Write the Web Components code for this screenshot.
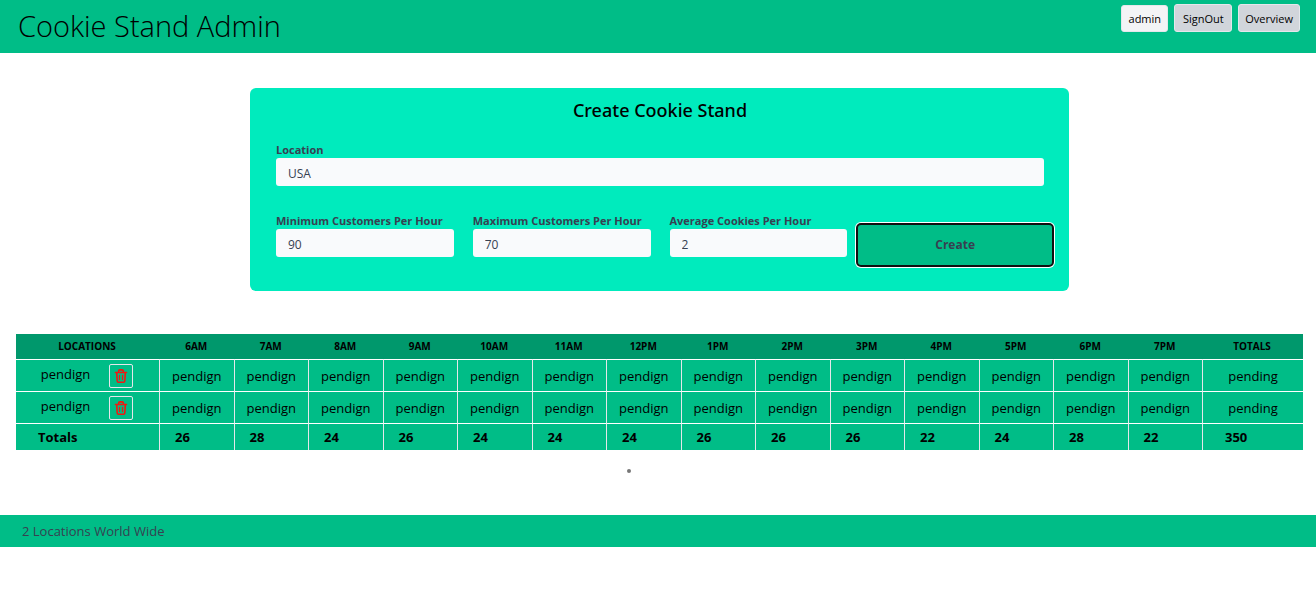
<!DOCTYPE html>
<html lang="en">
<head>
<meta charset="utf-8">
<title>Cookie Stand Admin</title>
<style>
  body {
    margin: 0;
    background: #fff;
    color: #000;
    font-family: "Open Sans", "Noto Sans", sans-serif;
    font-size: 13px;
    line-height: 20px;
    --green: #00bd87;
    --green-dark: #00986c;
    --mint: #00ebbd;
    --ink: #374151;
    --line: #e5e7eb;
  }
</style>
</head>
<body>
<cookie-stand-app></cookie-stand-app>

<script>
class BaseElement extends HTMLElement {
  connectedCallback() {
    if (this.shadowRoot) return;
    this.attachShadow({ mode: "open" }).innerHTML =
      "<style>*{box-sizing:border-box}" + this.styles() + "</style>" + this.markup();
  }
  styles() { return ""; }
  markup() { return "<slot></slot>"; }
}

class NavButton extends BaseElement {
  styles() {
    return `
      :host { display: block; }
      button {
        display: block; height: 28px; min-width: 58px; padding: 1px 6px 0;
        border: 1px solid var(--line); border-radius: 3px;
        background: #d1d5db; color: #000;
        font: 11px/20px "Open Sans", "Noto Sans", sans-serif;
      }
      :host([plain]) button { height: 27px; min-width: 47px; padding-top: 0; background: #f3f4f6; }`;
  }
  markup() { return `<button type="button"><slot></slot></button>`; }
}
customElements.define("nav-button", NavButton);

class AppHeader extends BaseElement {
  styles() {
    return `
      :host { display: block; background: var(--green); }
      header { display: flex; justify-content: space-between; align-items: flex-start;
        min-height: 53px; padding: 4px 16px 0 18px; }
      h1 { margin: 0; font-size: 29px; line-height: 44px; font-weight: 300; }
      nav { display: flex; gap: 6px; align-items: flex-end; }`;
  }
  markup() {
    return `<header><h1><slot></slot></h1>
      <nav><nav-button plain>admin</nav-button><nav-button>SignOut</nav-button><nav-button>Overview</nav-button></nav>
    </header>`;
  }
}
customElements.define("app-header", AppHeader);

class FormField extends BaseElement {
  styles() {
    return `
      :host { display: block; min-width: 0; }
      label { display: block; font-size: 11px; line-height: 16px; font-weight: 700; color: var(--ink); white-space: nowrap; }
      input { display: block; width: 100%; height: 28px; padding: 3px 12px 0;
        border: 0; border-radius: 3px; background: #f9fafc; color: var(--ink);
        font: 12px/20px "Open Sans", "Noto Sans", sans-serif; outline: 0; }`;
  }
  markup() {
    return `<label for="field">${this.getAttribute("label")}</label>
      <input id="field" type="text" value="${this.getAttribute("value")}">`;
  }
}
customElements.define("form-field", FormField);

class StandForm extends BaseElement {
  styles() {
    return `
      :host { display: block; width: 100%; max-width: 819px; }
      form { padding: 8px 25px 34px 26px; border-radius: 6px; background: var(--mint); }
      h2 { margin: 0 0 18px; text-align: center; font-family: "Noto Sans", "Open Sans", sans-serif;
        font-size: 18px; line-height: 28px; font-weight: 500; }
      .row { display: grid; grid-template-columns: repeat(4, 1fr); gap: 19px; margin-top: 27px; }
      button { align-self: end; height: 44px; margin: 0 -10px -10px; border: 2px solid #101010;
        border-radius: 5px; box-shadow: 0 0 0 1px #fff; background: var(--green); color: var(--ink);
        font: 700 12px/20px "Open Sans", "Noto Sans", sans-serif; }`;
  }
  markup() {
    return `<form>
      <h2>Create Cookie Stand</h2>
      <form-field label="Location" value="USA"></form-field>
      <div class="row">
        <form-field label="Minimum Customers Per Hour" value="90"></form-field>
        <form-field label="Maximum Customers Per Hour" value="70"></form-field>
        <form-field label="Average Cookies Per Hour" value="2"></form-field>
        <button type="button">Create</button>
      </div>
    </form>`;
  }
}
customElements.define("stand-form", StandForm);

class DeleteButton extends BaseElement {
  styles() {
    return `
      :host { display: block; }
      button { display: flex; align-items: center; justify-content: center; width: 24px; height: 24px;
        padding: 0; border: 1px solid var(--line); border-radius: 2px; background: none; }
      svg { display: block; width: 14px; height: 14px; }`;
  }
  markup() {
    return `<button type="button" aria-label="Delete location">
      <svg viewBox="0 0 14 14" fill="none" stroke="#f01810" stroke-width="1.6" stroke-linejoin="round" stroke-linecap="round">
        <path d="M1.5 3.5H12.5M2.7 3.5L3.2 12Q3.3 13.2 4.4 13.2H9.6Q10.7 13.2 10.8 12L11.3 3.5M4.6 3.4V2.3Q4.6 .9 6 .9H8Q9.4 .9 9.4 2.3V3.4"/>
        <path d="M5.5 6.3V10.6M8.5 6.3V10.6" stroke-width="1.2"/>
      </svg></button>`;
  }
}
customElements.define("delete-button", DeleteButton);

class StandTable extends BaseElement {
  styles() {
    return `
      :host { display: block; }
      table { width: 100%; table-layout: fixed; border-collapse: separate; border-spacing: 0; background: var(--green); }
      .first { width: 144px; }
      .last { width: 100px; }
      th, td { padding: 0; border-right: 1px solid var(--line); border-top: 1px solid #fff; }
      th:last-child, td:last-child { border-right: 0; }
      thead th { height: 25px; padding: 0 2px 1px 0; border: 0; background: var(--green-dark); font-size: 10px; line-height: 16px; font-weight: 700; }
      tbody td { height: 32px; padding-top: 1px; text-align: center; }
      tbody td:first-child { padding: 0 1px 0 0; }
      .place { display: flex; justify-content: center; align-items: center; gap: 19px; }
      .place span { margin-top: -4px; }
      tfoot th, tfoot td { height: 27px; padding-left: 15px; text-align: left; font-weight: 700; }
      tfoot th:first-child, tfoot td:last-child { padding-left: 22px; }`;
  }
  markup() {
    const hours = ["6AM","7AM","8AM","9AM","10AM","11AM","12PM","1PM","2PM","3PM","4PM","5PM","6PM","7PM"];
    const totals = [26,28,24,26,24,24,24,26,26,26,22,24,28,22,350];
    const row = `<tr><td><div class="place"><span>pendign</span><delete-button></delete-button></div></td>
      ${hours.map(() => "<td>pendign</td>").join("")}<td>pending</td></tr>`;
    return `<table>
      <thead><tr><th class="first" scope="col">LOCATIONS</th>
        ${hours.map(h => `<th scope="col">${h}</th>`).join("")}<th class="last" scope="col">TOTALS</th></tr></thead>
      <tbody>${row}${row}</tbody>
      <tfoot><tr><th scope="row">Totals</th>${totals.map(t => `<td>${t}</td>`).join("")}</tr></tfoot>
    </table>`;
  }
}
customElements.define("stand-table", StandTable);

class AppFooter extends BaseElement {
  styles() {
    return `
      :host { display: block; background: var(--green); color: var(--ink); }
      footer { padding: 6px 22px; }`;
  }
  markup() { return `<footer><slot></slot></footer>`; }
}
customElements.define("app-footer", AppFooter);

class CookieStandApp extends BaseElement {
  styles() {
    return `
      :host { display: block; }
      main { display: flex; flex-direction: column; align-items: center; padding: 35px 13px 42px 16px; }
      stand-table { width: 100%; margin-top: 43px; }
      .dot { width: 4px; height: 4px; margin: 19px 61px 0 0; border-radius: 2px; background: #777; }`;
  }
  markup() {
    return `<app-header>Cookie Stand Admin</app-header>
      <main><stand-form></stand-form><stand-table></stand-table><div class="dot"></div></main>
      <app-footer>2 Locations World Wide</app-footer>`;
  }
}
customElements.define("cookie-stand-app", CookieStandApp);
</script>
</body>
</html>
